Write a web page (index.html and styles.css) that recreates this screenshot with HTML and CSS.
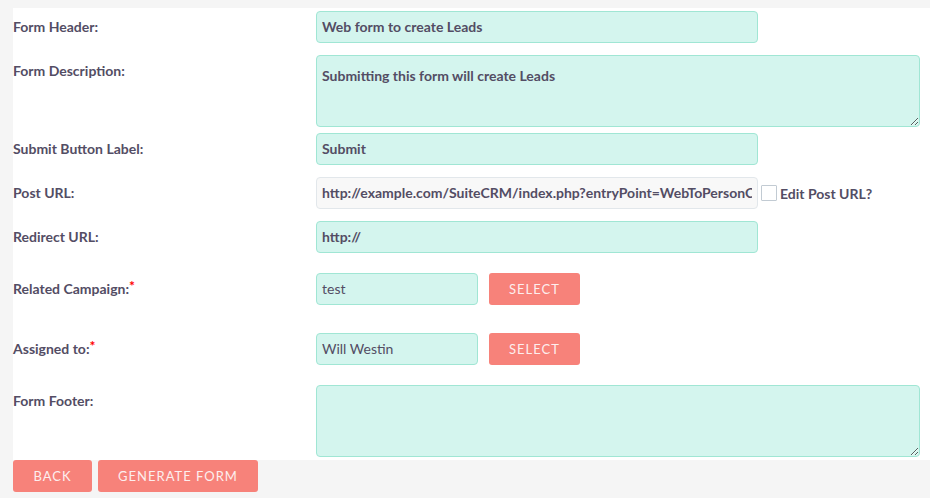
FILE: index.html
```html
<!DOCTYPE html>
<html>
<head>
<meta charset="utf-8">
<link rel="stylesheet" href="styles.css">
</head>
<body>
<div class="panel">
  <div class="row gap12">
    <div class="label">Form Header:</div>
    <div class="field"><input class="inp wide bold" value="Web form to create Leads"></div>
  </div>
  <div class="row gap6">
    <div class="label">Form Description:</div>
    <div class="field"><textarea class="ta bold">Submitting this form will create Leads</textarea></div>
  </div>
  <div class="row gap12">
    <div class="label">Submit Button Label:</div>
    <div class="field"><input class="inp wide bold" value="Submit"></div>
  </div>
  <div class="row gap12">
    <div class="label">Post URL:</div>
    <div class="field"><input class="inp wide bold ro" readonly value="http://example.com/SuiteCRM/index.php?entryPoint=WebToPersonCapture"><span class="check"></span><span class="checklabel">Edit Post URL?</span></div>
  </div>
  <div class="row gap20">
    <div class="label">Redirect URL:</div>
    <div class="field"><input class="inp wide bold" value="http://"></div>
  </div>
  <div class="row gap28">
    <div class="label">Related Campaign:<span class="req">*</span></div>
    <div class="field"><input class="inp short" value="test"><button class="btn sel">SELECT</button></div>
  </div>
  <div class="row gap20">
    <div class="label">Assigned to:<span class="req">*</span></div>
    <div class="field"><input class="inp short" value="Will Westin"><button class="btn sel">SELECT</button></div>
  </div>
  <div class="row gap3">
    <div class="label">Form Footer:</div>
    <div class="field"><textarea class="ta"></textarea></div>
  </div>
</div>
<div class="actions">
  <button class="btn back">BACK</button>
  <button class="btn gen">GENERATE FORM</button>
</div>
</body>
</html>
```
FILE: styles.css
```css
html, body {
  margin: 0;
  padding: 0;
  background: #f5f5f5;
  font-family: Lato, "Open Sans", sans-serif;
  color: #534d64;
}
.panel {
  margin: 8px 0 0 13px;
  background: #ffffff;
  padding-top: 3px;
}
.row {
  display: flex;
  align-items: flex-start;
}
.gap3 { padding-bottom: 3px; }
.gap6 { padding-bottom: 6px; }
.gap12 { padding-bottom: 12px; }
.gap20 { padding-bottom: 20px; }
.gap28 { padding-bottom: 28px; }
.label {
  width: 303px;
  flex: none;
  font-size: 14px;
  font-weight: bold;
  line-height: 31px;
}
.req {
  color: #ff0000;
  font-size: 14px;
  vertical-align: top;
  line-height: 26px;
}
.field {
  display: flex;
  align-items: center;
}
.inp, .ta {
  box-sizing: border-box;
  height: 32px;
  background: #d4f5ee;
  border: 1px solid #a0e6d4;
  border-radius: 4px;
  padding: 0 5px 1px;
  font-family: Lato, "Open Sans", sans-serif;
  font-size: 14px;
  color: #534d64;
  outline: none;
  margin: 0;
}
.bold { font-weight: bold; }
.wide { width: 442px; }
.short { width: 162px; }
.ro {
  background: #f8f8f8;
  border-color: #e2e7eb;
}
.ta {
  display: block;
  width: 604px;
  height: 72px;
  padding: 11px 5px 9px;
  resize: vertical;
}
.check {
  display: inline-block;
  box-sizing: border-box;
  width: 16px;
  height: 16px;
  margin-left: 3px;
  border: 1px solid #c2cbd3;
  background: #fff;
  border-radius: 1px;
}
.checklabel {
  margin-left: 3px;
  font-size: 14px;
  font-weight: bold;
}
.btn {
  box-sizing: border-box;
  height: 32px;
  border: none;
  border-radius: 3px;
  background: #f7827a;
  color: #fdeeee;
  font-family: Lato, "Open Sans", sans-serif;
  font-size: 13px;
  letter-spacing: 1px;
  padding: 0;
  margin: 0;
}
.sel {
  width: 91px;
  margin-left: 11px;
}
.actions {
  display: flex;
  gap: 6px;
  margin-left: 13px;
}
.back { width: 79px; }
.gen { width: 160px; }
```
